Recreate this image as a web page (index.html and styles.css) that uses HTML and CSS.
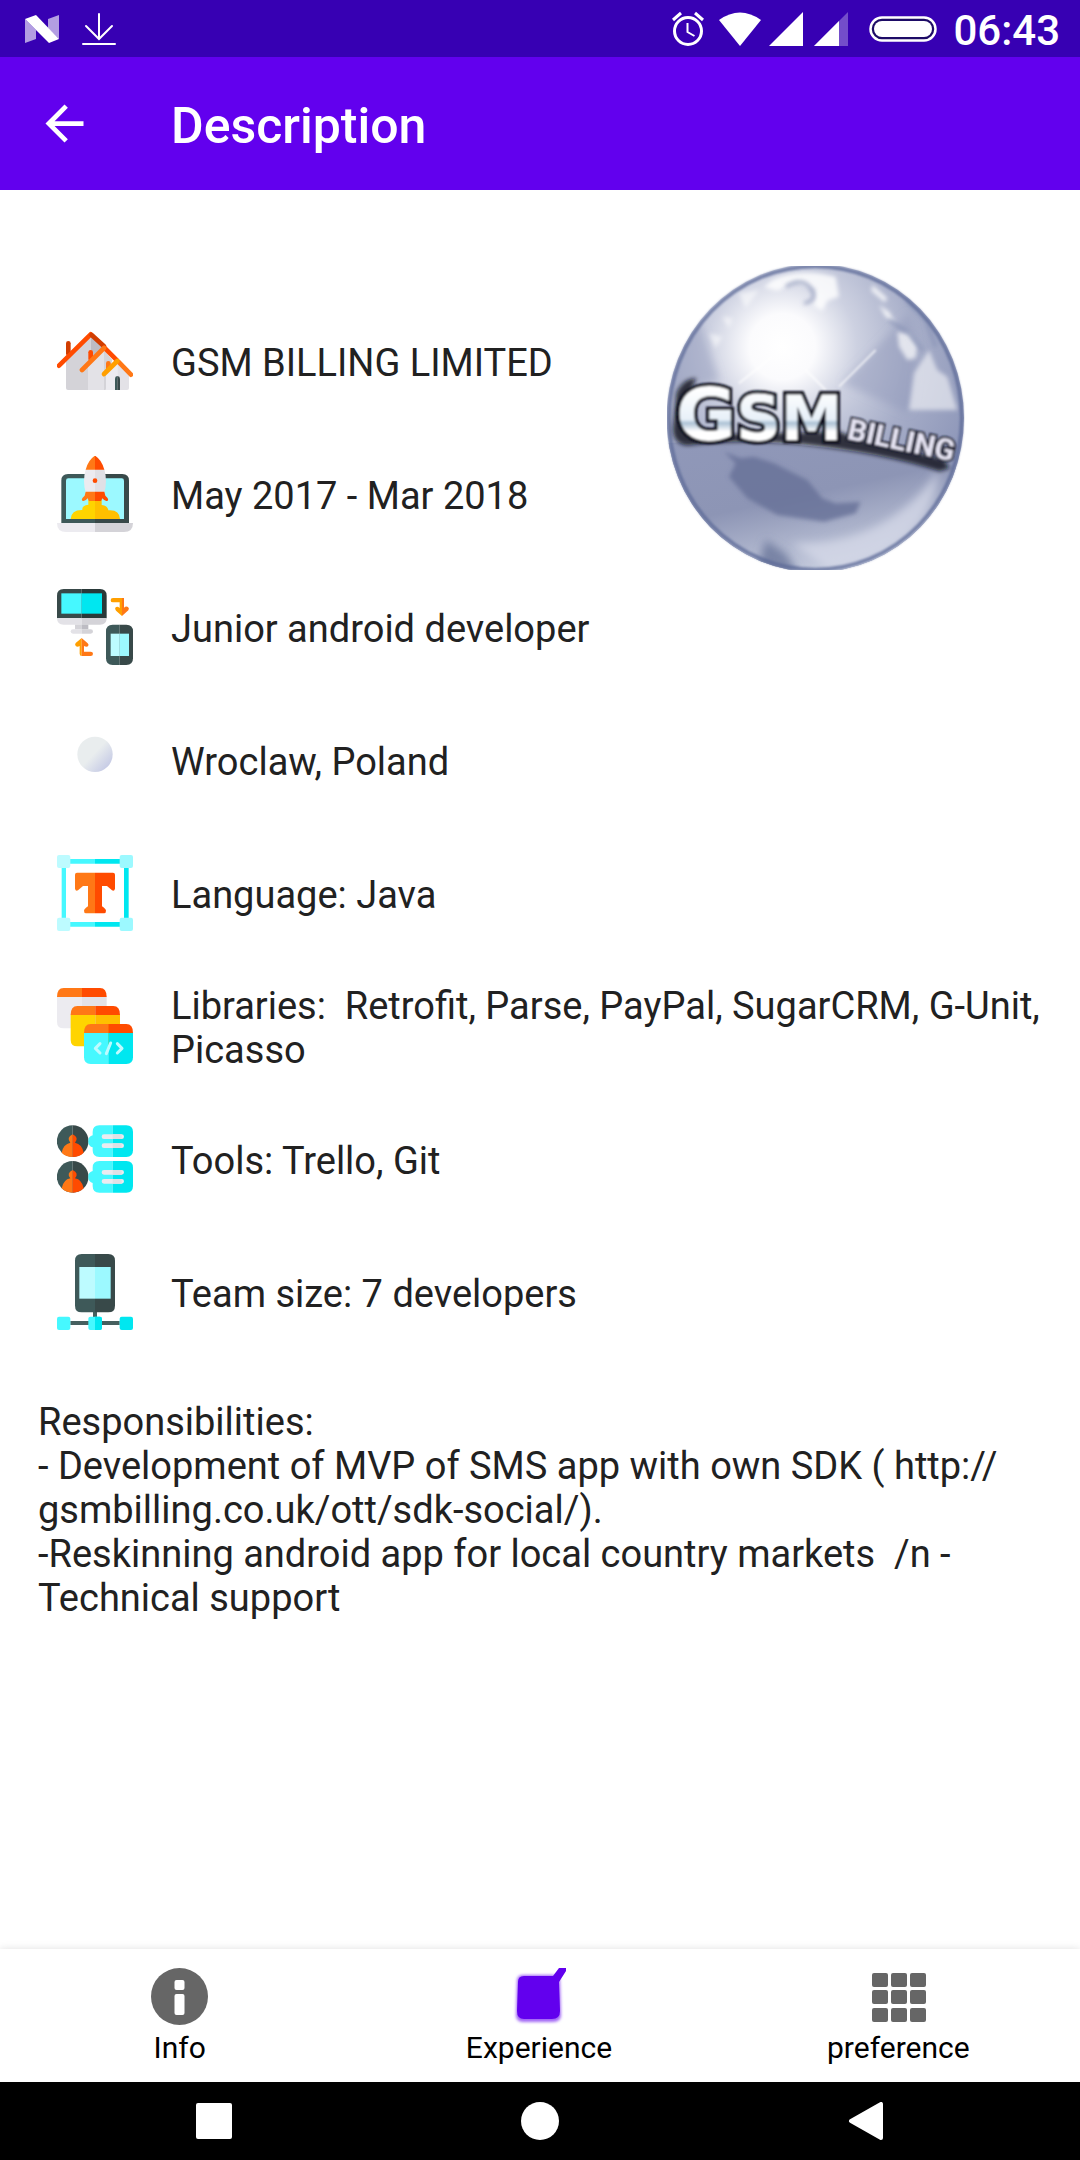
FILE: index.html
```html
<!DOCTYPE html>
<html lang="en">
<head>
<meta charset="utf-8">
<meta name="viewport" content="width=device-width, initial-scale=1">
<title>Description</title>
<link rel="stylesheet" href="styles.css">
</head>
<body>
<div class="status">
  <svg class="status-n" viewBox="0 0 34 28"><path fill="#fff" fill-opacity=".62" d="M0 4l11 11v9L0 28zM23 4l11-4v24L23 13z"/><path fill="#fff" d="M0 4L11 0l23 24-10 4z"/></svg>
  <svg class="status-dl" viewBox="0 0 34 34" fill="none" stroke="#fff" stroke-width="2" stroke-linecap="round"><path d="M17 2v24M4 14l13 13 13-13M1 32h32"/></svg>
  <div class="status-right">
    <svg class="status-alarm" viewBox="0 0 34 36" fill="none" stroke="#fff"><circle cx="17" cy="20" r="13.5" stroke-width="3"/><path stroke-width="3" d="M2 9l8-7M32 9l-8-7"/><path stroke-width="2" d="M16.500 12v9l7 4"/></svg>
    <svg class="status-wifi" viewBox="0 0 42 34"><path fill="#fff" d="M0 8Q21-7 42 8L21 34z"/></svg>
    <svg class="status-signal" viewBox="0 0 34 34"><path fill="#fff" d="M34 0v34H0z"/></svg>
    <svg class="status-signal" viewBox="0 0 34 34"><path fill="#fff" fill-opacity=".3" d="M34 0v34H0z"/><path fill="#fff" d="M25 9v25H0z"/></svg>
    <svg class="status-battery" viewBox="0 0 68 26"><rect x="1.500" y="1.500" width="65" height="23" rx="11.500" fill="#1d0b66" stroke="#fff" stroke-width="2.500"/><rect x="5" y="5" width="58" height="16" rx="8" fill="#fff"/></svg>
    <span class="clock">06:43</span>
  </div>
</div>
<header class="appbar">
  <button class="back" type="button" aria-label="Back"><svg viewBox="0 0 24 24"><path fill="#fff" d="M20 11H7.830l5.590-5.590L12 4l-8 8 8 8 1.410-1.410L7.830 13H20z"/></svg></button>
  <h1>Description</h1>
</header>
<main>
  <ul class="details">
    <li>
      <svg viewBox="51 39 228 228">
        <path fill="#d4d3d8" d="M78 140l74-70v170H84q-6 0-6-6z"/><path fill="#bdbcc3" d="M152 75l40 35-40 40z"/><path fill="#e3e2e7" d="M144 165l48-50v125h-48z"/><path fill="#d4d3d8" d="M192 120l25 30-20 90h-5z"/><path fill="#ecebf0" d="M198 185l34-34v89h-34z"/><path fill="#e3e2e7" d="M232 151l35 36v47q0 6-6 6h-29z"/>
        <g stroke-width="14" stroke-linecap="round" fill="none"><path stroke="#d13d00" d="M85 100v31"/><path stroke="#ff4b00" d="M152 127v20"/><path stroke="#ff7816" d="M205 160v15"/><path stroke="#ff4b00" d="M57 167l95-94"/><path stroke="#d13d00" d="M155 75l37 34"/><path stroke="#ff4b00" d="M193 113l38 38"/><path stroke="#ff7816" d="M126 180l66-66M235 155l38 39"/><path stroke="#ff9f00" d="M192 192l40-39"/></g>
        <path fill="#3e5959" d="M225 240v-34q0-7 7-8v42z"/><path fill="#384949" d="M232 198q8 1 8 8v34h-8z"/>
      </svg>
      <span>GSM BILLING LIMITED</span>
    </li>
    <li>
      <svg viewBox="51 438 228 228">
        <path fill="#3e5959" d="M64 640V512q0-20 20-20h81v148z"/><path fill="#384949" d="M165 492h82q20 0 20 20v128H165z"/>
        <path fill="#9cf9ff" d="M78 512q0-7 7-7h160q7 0 7 7v115H78z"/>
        <path fill="#ffd400" d="M92 627q2-28 35-27-2-14 18-16v-20h20v63z"/><path fill="#ffbf00" d="M165 560h20v25q18 1 20 16 33-3 35 26h-75z"/>
        <path fill="#ecebf0" d="M51 639h114v27H78q-27 0-27-27z"/><path fill="#d4d3d8" d="M165 639h114q0 27-27 27h-87z"/>
        <path fill="#ecebf0" d="M137 478h28v70h-28q-10-34 0-70z"/><path fill="#e0e0e5" d="M165 478h28q10 36 0 70h-28z"/>
        <path fill="#ff7816" d="M165 437v42h-28q8-30 28-42zM137 545h28v28h-18l-4-8q-9 11-16 7-5-5 7-15z"/><path fill="#ff4b00" d="M165 437q20 12 28 42h-28zM165 545h28l3 12q12 10 7 15-7 4-16-7l-4 8h-18z"/><circle cx="165" cy="512" r="7" fill="#ff4b00"/>
      </svg>
      <span>May 2017 - Mar 2018</span>
    </li>
    <li>
      <svg viewBox="51 57 228 228">
        <path fill="#384949" d="M51 145V77q0-20 20-20h54v88z"/><path fill="#293939" d="M125 57h55q20 0 20 20v68h-75z"/><path fill="#46f8ff" d="M64 70h61v61H64z"/><path fill="#00e7f0" d="M125 70h61v61h-61z"/>
        <path fill="#e3e2e7" d="M51 144h74v20H71q-20 0-20-20z"/><path fill="#d4d3d8" d="M125 144h75q0 20-20 20h-55z"/><path fill="#d4d3d8" d="M105 164h20v14h-20z"/><path fill="#bdbcc3" d="M125 164h20v14h-20z"/><path fill="#e3e2e7" d="M99 178h26v13H99q-7 0-7-6.500t7-6.500z"/><path fill="#d4d3d8" d="M125 178h27q7 0 7 6.500t-7 6.500h-27z"/>
        <path fill="#3e5959" d="M239 164v121h-21q-20 0-20-20v-81q0-20 20-20z"/><path fill="#384949" d="M239 164h20q20 0 20 20v81q0 20-20 20h-20z"/><path fill="#bdfbff" d="M212 191h27v67h-27z"/><path fill="#9cf9ff" d="M239 191h28v67h-28z"/>
        <path fill="#ff9f00" d="M219 84h27v54l-18-16q-5-6-1-10 5-4 12 2V97h-20q-7 0-7-6.500t7-6.500z"/><path fill="#ff7816" d="M246 84h6v29q6-6 12-2 5 4 1 10l-19 17z"/>
        <path fill="#ff9f00" d="M125 204v54q-6 0-6-7v-23q-6 4-11 1-5-5-1-10z"/><path fill="#ff7816" d="M125 204l18 16q5 5 1 9-5 3-12-1v17h20q7 0 7 6.500t-7 6.500h-27z"/>
      </svg>
      <span>Junior android developer</span>
    </li>
    <li>
      <svg viewBox="51 456 228 228">
        <defs><linearGradient id="pearl" x1=".15" y1=".15" x2=".9" y2=".85"><stop offset=".45" stop-color="#e9edee"/><stop offset="1" stop-color="#c5cae5"/></linearGradient></defs>
        <circle cx="165" cy="553" r="53" fill="url(#pearl)"/>
      </svg>
      <span>Wroclaw, Poland</span>
    </li>
    <li>
      <svg viewBox="51 45 228 228">
        <path fill="#46f8ff" d="M65 57h100v14H78v175h87v14H65z"/><path fill="#00e7f0" d="M165 57h101v203H165v-14h87V71h-87z"/>
        <g fill="#bdfbff"><rect x="51" y="45" width="40" height="39" rx="6"/><rect x="51" y="233" width="40" height="40" rx="6"/></g><g fill="#9cf9ff"><rect x="239" y="45" width="40" height="39" rx="6"/><rect x="239" y="233" width="40" height="40" rx="6"/></g>
        <path fill="#ff7816" d="M111 98h54v122h-27q-6 0-6-8 0-5 12-13v-61h-15l-15 13q-7 4-9-5v-42q0-6 6-6z"/><path fill="#ff4b00" d="M165 98h54q6 0 6 6v42q-2 9-9 5l-15-13h-15v61q12 8 12 13 0 8-6 8h-27z"/>
      </svg>
      <span>Language: Java</span>
    </li>
    <li>
      <svg viewBox="51 444 228 228">
        <path fill="#ecebf0" d="M51 470h75v95H71q-20 0-20-20z"/><path fill="#e3e2e7" d="M126 470h74v95h-74z"/><path fill="#ff7816" d="M51 471q0-27 20-27h55v27z"/><path fill="#ff4b00" d="M126 444h54q20 0 20 27h-74z"/>
        <path fill="#ffd400" d="M92 524h74v95h-54q-20 0-20-20z"/><path fill="#ffbf00" d="M166 524h74v95h-74z"/><path fill="#ff7816" d="M92 525q0-27 20-27h54v27z"/><path fill="#ff4b00" d="M166 498h54q20 0 20 27h-74z"/>
        <path fill="#46f8ff" d="M132 578h73v94h-53q-20 0-20-20z"/><path fill="#00e7f0" d="M205 578h74v74q0 20-20 20h-54z"/><path fill="#ff7816" d="M132 579q0-27 20-27h53v27z"/><path fill="#ff4b00" d="M205 552h54q20 0 20 27h-74z"/>
        <path fill="none" stroke="#bdfbff" stroke-width="9" stroke-linecap="round" stroke-linejoin="round" d="M180 611l-14 14 14 14M232 611l14 14-14 14M212 609l-13 32"/>
      </svg>
      <span>Libraries:  Retrofit, Parse, PayPal, SugarCRM, G-Unit, Picasso</span>
    </li>
    <li>
      <svg viewBox="51 63 228 228">
        <defs><g id="chat">
          <path fill="#3e5959" d="M98 76v95a47.500 47.500 0 010-95z"/><path fill="#384949" d="M98 76a47.500 47.500 0 010 95z"/>
          <path fill="#ff7816" d="M98 103v68q-20 0-33-13 5-26 26-30-13-15 7-25z"/><path fill="#ff4b00" d="M98 103q20 10 7 25 21 4 26 30-13 13-33 13z"/>
          <path fill="#46f8ff" d="M218 76v95h-40q-20 0-20-20v-9q-12-4-13-14v-8q1-10 13-14V96q0-20 20-20z"/><path fill="#00e7f0" d="M218 76h41q20 0 20 20v55q0 20-20 20h-41z"/>
          <path stroke="#ecebf0" stroke-width="14" stroke-linecap="round" d="M192 110h53M192 137h53"/><path stroke="#e0e0e5" stroke-width="14" d="M218 110h27M218 137h27"/>
        </g></defs>
        <use href="#chat"/><use href="#chat" y="107"/>
      </svg>
      <span>Tools: Trello, Git</span>
    </li>
    <li>
      <svg viewBox="51 462 228 228">
        <path fill="#46605f" d="M91 663h68v-30h12v30h68v12H91z"/><path fill="#3e5959" d="M165 462v175h-40q-20 0-20-20V482q0-20 20-20z"/><path fill="#384949" d="M165 462h40q20 0 20 20v135q0 20-20 20h-40z"/><path fill="#bdfbff" d="M118 501h47v95h-47z"/><path fill="#9cf9ff" d="M165 501h47v95h-47z"/>
        <rect x="51" y="650" width="40" height="40" rx="6" fill="#46f8ff"/><rect x="239" y="650" width="40" height="40" rx="6" fill="#00e7f0"/><rect x="145" y="650" width="41" height="40" rx="6" fill="#46f8ff"/><path fill="#00e7f0" d="M165 650h15q6 0 6 6v28q0 6-6 6h-15z"/>
      </svg>
      <span>Team size: 7 developers</span>
    </li>
  </ul>
  <svg class="globe" viewBox="84 48 894 912" role="img" aria-label="GSM Billing">
    <defs>
      <radialGradient id="ball" gradientUnits="userSpaceOnUse" cx="430" cy="290" r="620"><stop offset="0" stop-color="#fff"/><stop offset=".16" stop-color="#fbfbfd"/><stop offset=".36" stop-color="#cdd1e1"/><stop offset=".65" stop-color="#a6adc8"/><stop offset="1" stop-color="#8d96b8"/></radialGradient>
      <linearGradient id="low" x1="0" y1="0" x2=".5" y2="1"><stop offset="0" stop-color="#9098b9"/><stop offset=".5" stop-color="#8d95b5"/><stop offset="1" stop-color="#c9cfe0"/></linearGradient>
      <linearGradient id="chrome" x1="0" y1="0" x2="0" y2="1"><stop offset=".2" stop-color="#fff"/><stop offset=".56" stop-color="#e7f0f8"/><stop offset=".6" stop-color="#aac0d4"/><stop offset=".7" stop-color="#fff"/></linearGradient>
      <clipPath id="disc"><ellipse cx="529" cy="504" rx="446" ry="462"/></clipPath>
      <filter id="soft" x="-20%" y="-20%" width="140%" height="140%"><feGaussianBlur stdDeviation="7"/></filter>
      <filter id="glow" x="-20%" y="-40%" width="140%" height="180%"><feGaussianBlur stdDeviation="12"/></filter>
      <filter id="edge" x="-5%" y="-5%" width="110%" height="110%"><feGaussianBlur stdDeviation="3"/></filter>
    </defs>
    <g clip-path="url(#disc)">
      <rect x="80" y="40" width="900" height="930" fill="url(#ball)"/>
      <path fill="#8e96b9" fill-opacity=".45" filter="url(#glow)" d="M610 400l200-210q40 160 0 300zM90 440q0-150 90-230l60 180z"/>
      <g filter="url(#soft)" fill="#fff" fill-opacity=".82">
        <path d="M400 90q80-40 190-10l10 60-35 12-15 30-25-15 5-50-60-20-55 25-40-10z"/><path d="M700 105l45 40-8 12-40-35zM720 165l30 20 20 35-30-20z"/><path fill-opacity=".7" d="M775 245l35 5 25 40-5 35-25 5-25-40z"/><path fill-opacity=".55" d="M870 300l25 60 30 20 30 100H810l15-110z"/><path fill-opacity=".55" d="M300 130l60-10-40 55zM210 250l40 10-20 35zM250 200l30 5-10 30z"/>
      </g>
      <path filter="url(#soft)" fill="none" stroke="#8590b4" stroke-width="10" stroke-opacity=".7" d="M440 110q50-30 75 5t-20 45M800 150l60 60 30 80M750 210l60 40 40 50"/>
      <path filter="url(#edge)" stroke="#fff" stroke-opacity=".7" stroke-width="6" d="M600 410L710 300M560 420l-60-60M300 400l100-80"/>
      <path fill="url(#low)" d="M70 580q400-30 860 80l70-20v340H70z"/>
      <path filter="url(#soft)" fill="#667197" fill-opacity=".8" d="M255 605l50 20 40-5 60 20 40 20 60 30 45 55 40 15 75-5-15 35-95 25-140-20-90-50-55-65 20-40z"/>
      <path filter="url(#glow)" fill="#d6dae8" fill-opacity=".75" d="M460 880q280 10 440-220-30 250-330 300z"/>
      <path filter="url(#glow)" fill="#667197" fill-opacity=".75" d="M380 870l60 40 40 60H350zM600 810q170-10 260-90-90 80-260 90z"/>
    </g>
    <ellipse cx="529" cy="504" rx="439" ry="455" fill="none" stroke="#5c6a97" stroke-width="11" stroke-opacity=".75" filter="url(#edge)"/>
    <path filter="url(#soft)" fill="#090e1b" fill-opacity=".8" d="M112 430q20-45 60-45l-40 90 20 80 450-10 50 20 260 62 20 27-30 10q-170-55-420-82-200-15-330 4-50 0-50-50z"/>
    <g filter="url(#edge)">
      <text class="globe-gsm" x="111" y="570" fill="url(#chrome)" stroke="#090e1b" stroke-width="20" paint-order="stroke"><tspan class="globe-initial">G</tspan>SM</text>
      <text class="globe-billing" x="622" y="566" transform="rotate(12 622 566)" fill="#e6e4f3" stroke="#15182a" stroke-width="12" paint-order="stroke">BILLING</text>
    </g>
  </svg>
  <p class="duties">Responsibilities:
- Development of MVP of SMS app with own SDK ( http://<wbr>gsmbilling.co.uk/ott/sdk-social/).
-Reskinning android app for local country markets  /n - Technical support</p>
</main>
<nav class="tabs">
  <a href="#info"><svg viewBox="0 0 57 57"><circle cx="28.500" cy="28.500" r="28.500" fill="#666"/><rect x="23.500" y="12" width="10" height="10" rx="2" fill="#fff"/><rect x="23.500" y="26" width="10" height="21" rx="2" fill="#fff"/></svg>Info</a>
  <a href="#experience" aria-current="page"><svg viewBox="0 0 57 57"><defs><filter id="halo" x="-20%" y="-20%" width="140%" height="140%"><feGaussianBlur stdDeviation="1.500"/></filter></defs><path filter="url(#halo)" fill="#6200ee" fill-opacity=".6" d="M13 7h31q6 0 6 6l1 34q0 7-8 7H13q-7 0-7-7l1-34q0-6 6-6z"/><path fill="#6200ee" d="M14 8h29L49 0h7v3l-7 11 1 29q0 8-8 8H14q-7 0-7-8l1-29q0-6 6-6z"/></svg>Experience</a>
  <a href="#preference"><svg viewBox="0 0 57 57" fill="#666"><rect x="2" y="5" width="16" height="14" rx="2"/><rect x="21" y="5" width="16" height="14" rx="2"/><rect x="40" y="5" width="16" height="14" rx="2"/><rect x="2" y="22" width="16" height="14" rx="2"/><rect x="21" y="22" width="16" height="14" rx="2"/><rect x="40" y="22" width="16" height="14" rx="2"/><rect x="2" y="40" width="16" height="14" rx="2"/><rect x="21" y="40" width="16" height="14" rx="2"/><rect x="40" y="40" width="16" height="14" rx="2"/></svg>preference</a>
</nav>
<div class="system">
  <button type="button" aria-label="Recent apps"><svg viewBox="0 0 38 38"><rect x="1" y="1" width="36" height="36" rx="2" fill="#fff"/></svg></button>
  <button type="button" aria-label="Home"><svg viewBox="0 0 38 38"><circle cx="19" cy="19" r="19" fill="#fff"/></svg></button>
  <button type="button" aria-label="Back"><svg viewBox="0 0 38 38"><path fill="#fff" stroke="#fff" stroke-width="4" stroke-linejoin="round" d="M34 2v34L4 19z"/></svg></button>
</div>
</body>
</html>
```
FILE: styles.css
```css
* { box-sizing: border-box; }

body {
  margin: 0;
  min-height: 100vh;
  display: flex;
  flex-direction: column;
  background: #fff;
  color: #212121;
  font-family: Roboto, sans-serif;
  font-size: 38px;
  line-height: 44px;
}

svg { display: block; flex: none; }

button {
  padding: 0;
  border: 0;
  background: none;
}

.status {
  display: flex;
  align-items: center;
  gap: 23px;
  height: 57px;
  padding: 0 20px 0 25px;
  background: #3700b3;
  color: #fff;
}

.status-right {
  display: flex;
  align-items: center;
  margin-left: auto;
}

.status-n { width: 34px; height: 28px; }
.status-dl { width: 34px; height: 34px; }
.status-alarm { width: 34px; height: 36px; margin-right: 14px; }
.status-wifi { width: 42px; height: 34px; margin-right: 8px; }
.status-signal { width: 34px; height: 34px; margin-right: 11px; }
.status-battery { width: 68px; height: 26px; margin: 0 16px 0 10px; }

.clock {
  padding-top: 4px;
  font-size: 42px;
  font-weight: 500;
}

.appbar {
  display: flex;
  align-items: center;
  gap: 78px;
  height: 133px;
  padding: 0 36px;
  background: #6200ee;
  color: #fff;
}

.back svg { width: 57px; height: 57px; }

.appbar h1 {
  margin: 0;
  padding-top: 4px;
  font-size: 50px;
  font-weight: 500;
  line-height: 56px;
}

main {
  flex: 1;
  display: grid;
  align-content: start;
}

.details {
  grid-area: 1 / 1;
  margin: 0;
  padding: 104px 38px 0 57px;
  list-style: none;
}

.details li {
  display: flex;
  align-items: center;
  gap: 38px;
  min-height: 133px;
  white-space: pre-wrap;
}

.details span { padding-top: 4px; }

.details svg { width: 76px; height: 76px; }

.globe {
  grid-area: 1 / 1;
  justify-self: end;
  width: 298px;
  height: 304px;
  margin: 76px 115px 0 0;
}

.globe-gsm {
  font-family: "DejaVu Sans", sans-serif;
  font-weight: 700;
  font-size: 186px;
}

.globe-initial { font-size: 220px; }

.globe-billing {
  font-weight: 700;
  font-size: 88px;
}

.duties {
  margin: 0;
  padding: 42px 38px;
  white-space: pre-wrap;
}

.tabs {
  display: grid;
  grid-template-columns: repeat(3, 1fr);
  height: 133px;
  padding-right: 2px;
  background: #fff;
  box-shadow: 0 0 8px rgba(0, 0, 0, 0.12);
}

.tabs a {
  display: flex;
  flex-direction: column;
  align-items: center;
  gap: 6px;
  padding-top: 19px;
  color: #000;
  font-size: 30px;
  line-height: 34px;
  text-decoration: none;
}

.tabs svg { width: 57px; height: 57px; }

.system {
  display: grid;
  grid-template-columns: repeat(3, 1fr);
  height: 78px;
  padding: 0 51px;
  background: #000;
}

.system button {
  display: flex;
  align-items: center;
  justify-content: center;
}

.system svg { width: 38px; height: 38px; }
```
